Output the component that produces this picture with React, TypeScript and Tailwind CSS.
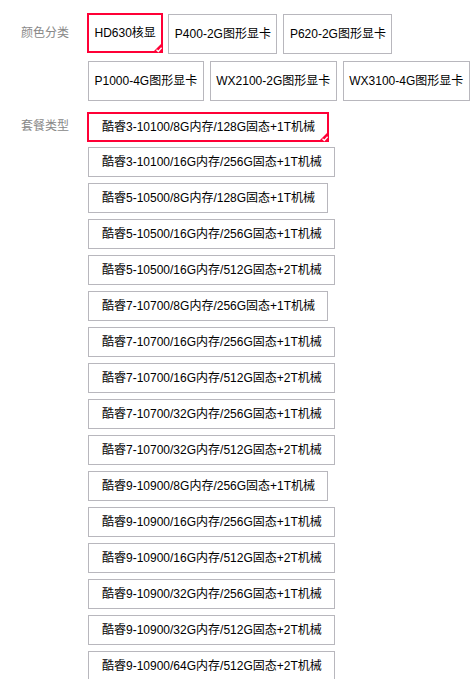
import React from 'react';

const colors = [
  'HD630核显',
  'P400-2G图形显卡',
  'P620-2G图形显卡',
  'P1000-4G图形显卡',
  'WX2100-2G图形显卡',
  'WX3100-4G图形显卡',
];

const packages = [
  '酷睿3-10100/8G内存/128G固态+1T机械',
  '酷睿3-10100/16G内存/256G固态+1T机械',
  '酷睿5-10500/8G内存/128G固态+1T机械',
  '酷睿5-10500/16G内存/256G固态+1T机械',
  '酷睿5-10500/16G内存/512G固态+2T机械',
  '酷睿7-10700/8G内存/256G固态+1T机械',
  '酷睿7-10700/16G内存/256G固态+1T机械',
  '酷睿7-10700/16G内存/512G固态+2T机械',
  '酷睿7-10700/32G内存/256G固态+1T机械',
  '酷睿7-10700/32G内存/512G固态+2T机械',
  '酷睿9-10900/8G内存/256G固态+1T机械',
  '酷睿9-10900/16G内存/256G固态+1T机械',
  '酷睿9-10900/16G内存/512G固态+2T机械',
  '酷睿9-10900/32G内存/256G固态+1T机械',
  '酷睿9-10900/32G内存/512G固态+2T机械',
  '酷睿9-10900/64G内存/512G固态+2T机械',
];

const Tick = () => (
  <svg
    className="absolute -bottom-[2px] -right-[2px]"
    width="11"
    height="11"
    viewBox="0 0 11 11"
  >
    <path d="M11 0 L11 11 L0 11 Z" fill="#ff0036" />
    <path
      d="M4.5 7.8 L6.3 9.5 L9.6 5.8"
      fill="none"
      stroke="#fff"
      strokeWidth="1.3"
    />
  </svg>
);

const SkuItem = ({
  text,
  selected,
  tall,
}: {
  text: string;
  selected?: boolean;
  tall?: boolean;
}) => {
  const base = tall
    ? 'h-[40px] px-[5.5px]'
    : 'h-[30px] pl-[13px] pr-[12px]';
  const state = selected
    ? 'm-[-1px] border-2 border-[#ff0036]'
    : 'border border-[#b8b7bd]';
  return (
    <div
      className={`relative flex items-center whitespace-nowrap bg-white text-[12px] text-black ${base} ${state}`}
    >
      {text}
      {selected && <Tick />}
    </div>
  );
};

export default function App() {
  return (
    <div
      className="h-screen overflow-hidden bg-white pl-[21px] pt-[14px]"
      style={{ fontFamily: '"Liberation Sans", "Noto Sans CJK SC", sans-serif' }}
    >
      <div className="flex">
        <div className="w-[67px] shrink-0 pt-[10px] text-[12px] leading-[18px] text-[#888]">
          颜色分类
        </div>
        <div className="flex flex-1 flex-wrap gap-x-[6px] gap-y-[7px]">
          {colors.map((c, i) => (
            <SkuItem key={c} text={c} selected={i === 0} tall />
          ))}
        </div>
      </div>

      <div className="mt-[12px] flex">
        <div className="w-[67px] shrink-0 pt-[4px] text-[12px] leading-[18px] text-[#888]">
          套餐类型
        </div>
        <div className="flex flex-1 flex-wrap gap-x-[6px] gap-y-[6px]">
          {packages.map((p, i) => (
            <SkuItem key={p} text={p} selected={i === 0} />
          ))}
        </div>
      </div>
    </div>
  );
}
